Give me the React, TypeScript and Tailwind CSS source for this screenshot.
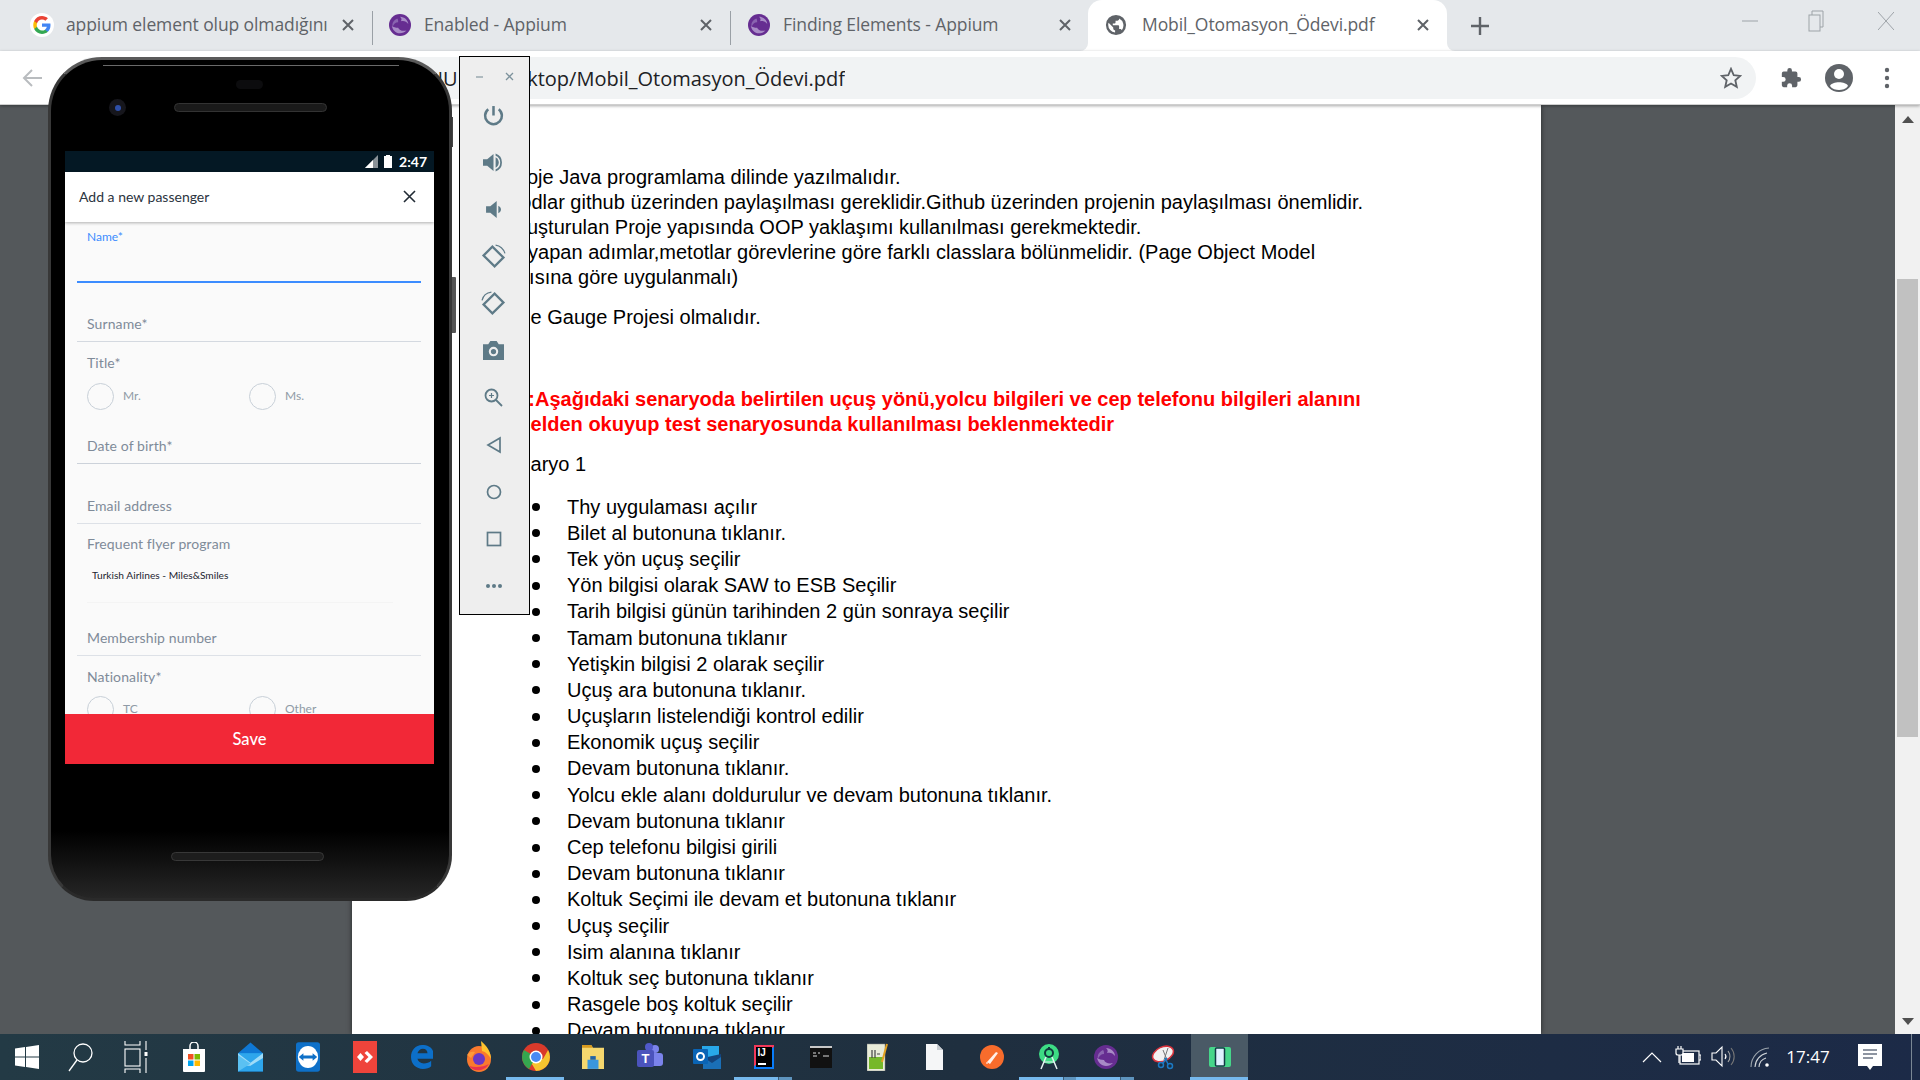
import React from "react";

const sans = "font-['Liberation_Sans',Arial,sans-serif]";

function Appium({ size = 22 }: { size?: number }) {
  return (
    <svg width={size} height={size} viewBox="0 0 24 24">
      <circle cx="12" cy="12" r="12" fill="#662d91" />
      <path d="M12 3c5 0 9 4 9 8-2-3-5-4-8-3 1-2 1-3-1-5z" fill="#a88bc6" />
      <path d="M3 13c1 4 4 8 9 8 3 0 5-1 7-3-4 1-8 0-9-3-3 0-5-1-7-2z" fill="#a88bc6" />
      <path d="M9 5C5 7 3 10 4 14c1-3 3-5 6-5 0-2 0-3-1-4z" fill="#8a64b0" />
    </svg>
  );
}

function GoogleG() {
  return (
    <svg width="24" height="24" viewBox="0 0 48 48">
      <circle cx="24" cy="24" r="24" fill="#fff" />
      <path fill="#4285f4" d="M41 24.5c0-1.2-.1-2.400-.3-3.500H24v6.700h9.600c-.4 2.200-1.700 4.100-3.500 5.300v4.400h5.700C39.100 34.300 41 29.800 41 24.500z" />
      <path fill="#34a853" d="M24 42c4.700 0 8.700-1.600 11.700-4.300L30 33.300c-1.600 1.100-3.600 1.700-6 1.700-4.600 0-8.500-3.100-9.900-7.300H8.300v4.500C11.200 38 17.100 42 24 42z" />
      <path fill="#fbbc05" d="M14.100 27.700c-.4-1.100-.6-2.300-.6-3.700s.2-2.500.6-3.700v-4.500H8.300C7.100 18.200 6.500 21 6.500 24s.7 5.800 1.800 8.200z" />
      <path fill="#ea4335" d="M24 13c2.600 0 4.900.9 6.800 2.700l5-5C32.700 7.800 28.700 6 24 6 17.100 6 11.200 10 8.300 15.800l5.800 4.500C15.500 16.100 19.400 13 24 13z" />
    </svg>
  );
}

function Globe() {
  return (
    <svg width="22" height="22" viewBox="0 0 24 24">
      <path fill="#5f6368" d="M12 1a11 11 0 1 0 0 22 11 11 0 0 0 0-22zM3.500 12c0-.9.100-1.700.4-2.500L9 14.600v1.100c0 1.100.9 2 2 2v2.600A8.500 8.500 0 0 1 3.500 12zm14.800 5.700c-.3-.8-1-1.400-1.900-1.400h-1v-3c0-.6-.4-1-1-1H8.500v-2h2c.6 0 1-.4 1-1v-2h2c1.100 0 2-.9 2-2v-.400a8.500 8.500 0 0 1 2.800 12.800z" />
    </svg>
  );
}

function TabX() {
  return (
    <svg width="14" height="14" viewBox="0 0 14 14" stroke="#5f6368" strokeWidth="2" className="shrink-0">
      <path d="M2 2l10 10M12 2L2 12" />
    </svg>
  );
}

function Tab({ icon, title, w, pl, textW, sep = true }: { icon: React.ReactNode; title: string; w: string; pl: string; textW: string; sep?: boolean }) {
  return (
    <div className={`${w} ${pl} h-full flex items-center relative pb-[2px]`}>
      <div className="w-[24px] flex justify-center shrink-0">{icon}</div>
      <div className={`${textW} ml-[12px] overflow-hidden whitespace-nowrap text-[17.500px] tracking-[-0.1px] text-[#5f6368] font-['Open_Sans',sans-serif]`}>{title}</div>
      <TabX />
      {sep && <div className="absolute right-0 top-[11px] w-px h-[34px] bg-[#9aa0a6]" />}
    </div>
  );
}

function TaskIcon({ children, bar }: { children?: React.ReactNode; bar?: "on" | "split" | "active" }) {
  return (
    <div className={`w-[57px] h-full relative flex items-center justify-center ${bar === "active" ? "bg-[#4a5a66]" : ""}`}>
      {children}
      {bar && <div className="absolute bottom-0 left-[-1px] right-0 h-[3px] bg-[#76b9ed]" />}
      {bar === "split" && <div className="absolute bottom-0 right-0 w-[14px] h-[3px] bg-[#5e94be] border-l border-[#3a5a75]" />}
    </div>
  );
}

const Ic = "#5e7a87";

function EmuBtn({ children }: { children: React.ReactNode }) {
  return <div className="h-[47px] flex items-center justify-center pr-[2px]">{children}</div>;
}

function Emu() {
  return (
    <div className="absolute left-[459px] top-[-49px] w-[71px] h-[559px] bg-[#eeeeee] border border-black z-20">
      <div className="h-[40px] flex items-center justify-between pl-[15px] pr-[14px]">
        <svg width="10" height="10" viewBox="0 0 10 10"><path d="M1 5h7" stroke="#9aa8af" strokeWidth="1.500" /></svg>
        <svg width="10" height="10" viewBox="0 0 10 10"><path d="M1 1l7 7M8 1L1 8" stroke="#7d929c" strokeWidth="1.300" /></svg>
      </div>
      <div className="mt-[-5px]">
        <EmuBtn>
          <svg width="21" height="21" viewBox="0 0 20 20" fill="none" stroke={Ic} strokeWidth="2.400">
            <path d="M10 1v9" /><path d="M5 4a8 8 0 1 0 10 0" />
          </svg>
        </EmuBtn>
        <EmuBtn>
          <svg width="21" height="21" viewBox="0 0 20 20" fill={Ic}>
            <path d="M0 7v6h4l6 5V2L4 7z" /><path d="M12 5c2 1 3 3 3 5s-1 4-3 5z" /><path d="M12 1.500a9 9 0 0 1 0 17v-2a7 7 0 0 0 0-13z" />
          </svg>
        </EmuBtn>
        <EmuBtn>
          <svg width="17" height="17" viewBox="0 0 16 16" fill={Ic}>
            <path d="M1 5v6h4l6 5V0L5 5z" /><path d="M12.500 4.500c1.500.8 2.500 2 2.500 3.500s-1 2.700-2.500 3.500z" />
          </svg>
        </EmuBtn>
        <EmuBtn>
          <svg width="25" height="25" viewBox="0 0 24 24" fill="none" stroke={Ic} strokeWidth="2.200">
            <rect x="4.500" y="6" width="15" height="12" transform="rotate(45 12 12)" />
            <path d="M14 1c4 .5 7.500 3.500 9 8" strokeWidth="1.200" />
          </svg>
        </EmuBtn>
        <EmuBtn>
          <svg width="25" height="25" viewBox="0 0 24 24" fill="none" stroke={Ic} strokeWidth="2.200">
            <rect x="4.500" y="6" width="15" height="12" transform="rotate(-45 12 12)" />
            <path d="M10 1C5.500 1.500 2 4.500 1 9" strokeWidth="1.200" />
          </svg>
        </EmuBtn>
        <EmuBtn>
          <svg width="21" height="21" viewBox="0 0 20 20">
            <path fill={Ic} d="M0 4h5l2-3h6l2 3h5v15H0z" />
            <circle cx="10" cy="11" r="3.500" fill="none" stroke="#eeeeee" strokeWidth="2" />
          </svg>
        </EmuBtn>
        <EmuBtn>
          <svg width="19" height="19" viewBox="0 0 19 19" fill="none" stroke={Ic} strokeWidth="1.800">
            <circle cx="7.500" cy="7.500" r="6" /><path d="M12 12l6 6" /><path d="M7.500 5v5M5 7.500h5" strokeWidth="1.200" />
          </svg>
        </EmuBtn>
        <EmuBtn>
          <svg width="16" height="18" viewBox="0 0 16 18" fill="none" stroke={Ic} strokeWidth="1.700"><path d="M14 2v14L2 9z" /></svg>
        </EmuBtn>
        <EmuBtn>
          <svg width="18" height="18" viewBox="0 0 18 18" fill="none" stroke={Ic} strokeWidth="1.700"><circle cx="9" cy="9" r="6.500" /></svg>
        </EmuBtn>
        <EmuBtn>
          <svg width="16" height="16" viewBox="0 0 16 16" fill="none" stroke={Ic} strokeWidth="1.700"><rect x="1.500" y="1.500" width="13" height="13" /></svg>
        </EmuBtn>
        <EmuBtn>
          <svg width="18" height="6" viewBox="0 0 18 6" fill={Ic}><circle cx="3" cy="3" r="2" /><circle cx="9" cy="3" r="2" /><circle cx="15" cy="3" r="2" /></svg>
        </EmuBtn>
      </div>
    </div>
  );
}

function Radio({ label, w }: { label: string; w: string }) {
  return (
    <div className={`${w} flex items-center`}>
      <div className="w-[27px] h-[27px] rounded-full border border-[#c8d0d8] shrink-0" />
      <div className="ml-[9px] text-[12px] text-[#8f9aa6]">{label}</div>
    </div>
  );
}

function Label({ children, className = "" }: { children: React.ReactNode; className?: string }) {
  return <div className={`px-[10px] h-[16px] leading-[16px] text-[14px] tracking-[0.1px] text-[#7f8b99] ${className}`}>{children}</div>;
}

function Phone() {
  return (
    <div className="absolute left-[48px] top-[-48px] w-[404px] h-[844px] z-10">
      <div className="absolute right-[-4px] top-[220px] w-[5px] h-[56px] bg-[#555] rounded-r-[1px]" />
      <div className="absolute right-[-1px] top-[60px] w-[1px] h-[30px] bg-[#444]" />
      <div className="w-full h-full rounded-t-[54px] rounded-b-[46px] border-[3px] border-t-[#5a5a5a] border-x-[#383838] border-b-[#2a2a2a] bg-[linear-gradient(to_bottom,#000_0%,#000_92%,#262626_100%)] pt-[91px] pl-[14px] relative overflow-hidden font-['Lato',sans-serif]">
        <div className="absolute top-[5px] left-[52px] w-[296px] h-px bg-[#6a6a6a]" />
        <div className="absolute top-[20px] left-[185px] w-[27px] h-[9px] rounded-full bg-[#0c0c0e]" />
        <div className="absolute top-[39px] left-[58px] w-[17px] h-[17px] rounded-full bg-[#16161c] flex items-center justify-center">
          <div className="w-[6px] h-[6px] rounded-full bg-[#2e4fa8]" />
        </div>
        <div className="absolute top-[43px] left-[123px] w-[153px] h-[9px] rounded-full bg-[#1a1a1a] border border-[#333]" />
        <div className="absolute top-[792px] left-[120px] w-[153px] h-[9px] rounded-full bg-[#1d1d1d] border border-[#383838]" />
        <div className="w-[369px]">
          <div className="h-[21px] bg-[#041824] flex items-center justify-end pr-[7px] gap-[6px] text-white">
            <svg width="13" height="13" viewBox="0 0 13 13"><path d="M13 0v13H0z" fill="#8a9298" /><path d="M8 5v8H0z" fill="#fff" /></svg>
            <svg width="8" height="13" viewBox="0 0 8 13"><path d="M0 1h2V0h4v1h2v12H0z" fill="#fff" /></svg>
            <span className="ml-[1px] text-[14px] font-bold leading-none">2:47</span>
          </div>
          <div className="h-[50px] bg-white shadow-[0_1px_3px_rgba(0,0,0,0.3)] flex items-center justify-between pl-[14px] pr-[18px] pb-[2px] relative z-10">
            <span className="text-[14px] text-[#2b3440]">Add a new passenger</span>
            <svg width="13" height="13" viewBox="0 0 13 13" stroke="#222b35" strokeWidth="1.600"><path d="M1 1l11 11M12 1L1 12" /></svg>
          </div>
          <div className="h-[492px] bg-[#fafafa] overflow-hidden pl-[12px] pr-[13px]">
            <div className="mt-[7px] px-[10px] h-[16px] leading-[16px] text-[12px] text-[#3c8cff]">Name*</div>
            <div className="h-[38px] border-b-2 border-[#3c8cff]" />
            <Label className="mt-[33px]">Surname*</Label>
            <div className="h-[10px] border-b border-[#d4d9e0]" />
            <Label className="mt-[13px]">Title*</Label>
            <div className="mt-[12px] h-[26px] pl-[10px] flex">
              <Radio label="Mr." w="w-[162px]" />
              <Radio label="Ms." w="w-[120px]" />
            </div>
            <Label className="mt-[29px]">Date of birth*</Label>
            <div className="h-[10px] border-b border-[#ccd2da]" />
            <Label className="mt-[34px]">Email address</Label>
            <div className="h-[10px] border-b border-[#dde1e7]" />
            <Label className="mt-[12px]">Frequent flyer program</Label>
            <div className="mt-[17px] pl-[15px] h-[12px] leading-[12px] text-[10.200px] text-[#1d2530]">Turkish Airlines - Miles&amp;Smiles</div>
            <div className="ml-[10px] w-[306px] h-[22px] border-b border-[#f4f4f4]" />
            <Label className="mt-[27px]">Membership number</Label>
            <div className="h-[10px] border-b border-[#dde1e7]" />
            <Label className="mt-[13px]">Nationality*</Label>
            <div className="mt-[11px] h-[26px] pl-[10px] flex">
              <Radio label="TC" w="w-[162px]" />
              <Radio label="Other" w="w-[120px]" />
            </div>
          </div>
          <div className="h-[50px] bg-[#f22837] flex items-center justify-center text-white text-[16.500px] font-medium">Save</div>
        </div>
      </div>
    </div>
  );
}

const lines = [
  "Thy uygulaması açılır",
  "Bilet al butonuna tıklanır.",
  "Tek yön uçuş seçilir",
  "Yön bilgisi olarak SAW to ESB Seçilir",
  "Tarih bilgisi günün tarihinden 2 gün sonraya seçilir",
  "Tamam butonuna tıklanır",
  "Yetişkin bilgisi 2 olarak seçilir",
  "Uçuş ara butonuna tıklanır.",
  "Uçuşların listelendiği kontrol edilir",
  "Ekonomik uçuş seçilir",
  "Devam butonuna tıklanır.",
  "Yolcu ekle alanı doldurulur ve devam butonuna tıklanır.",
  "Devam butonuna tıklanır",
  "Cep telefonu bilgisi girili",
  "Devam butonuna tıklanır",
  "Koltuk Seçimi ile devam et butonuna tıklanır",
  "Uçuş seçilir",
  "Isim alanına tıklanır",
  "Koltuk seç butonuna tıklanır",
  "Rasgele boş koltuk seçilir",
  "Devam butonuna tıklanır",
];

function Pdf() {
  return (
    <div className={`ml-[352px] w-[1189px] h-full bg-white overflow-hidden pt-[60px] text-[20px] leading-[25px] text-black whitespace-nowrap ${sans} shadow-[0_0_5px_rgba(0,0,0,0.55)]`}>
      <div className="pl-[155px]">Proje Java programlama dilinde yazılmalıdır.</div>
      <div className="pl-[155px]">Kodlar github üzerinden paylaşılması gereklidir.Github üzerinden projenin paylaşılması önemlidir.</div>
      <div className="pl-[155px]">Oluşturulan Proje yapısında OOP yaklaşımı kullanılması gerekmektedir.</div>
      <div className="pl-[155px]">İş yapan adımlar,metotlar görevlerine göre farklı classlara bölünmelidir. (Page Object Model</div>
      <div className="pl-[143px]">Yapısına göre uygulanmalı)</div>
      <div className="pl-[143px] mt-[15px]">Proje Gauge Projesi olmalıdır.</div>
      <div className="pl-[143px] mt-[57px] font-bold text-[#ff0000]">Not:Aşağıdaki senaryoda belirtilen uçuş yönü,yolcu bilgileri ve cep telefonu bilgileri alanını</div>
      <div className="pl-[143px] font-bold text-[#ff0000]">Excelden okuyup test senaryosunda kullanılması beklenmektedir</div>
      <div className="pl-[143px] mt-[15px]">Senaryo 1</div>
      <div className="mt-[17px] pl-[180px]">
        {lines.map((l, i) => (
          <div key={i} className="h-[26.200px] flex items-center">
            <div className="w-[8px] h-[8px] rounded-full bg-black mr-[27px] shrink-0" />
            <span>{l}</span>
          </div>
        ))}
      </div>
    </div>
  );
}

function Scrollbar() {
  return (
    <div className="w-[25px] h-full bg-[#f1f1f1] flex flex-col items-center">
      <svg width="12" height="7" viewBox="0 0 12 7" className="mt-[11px]"><path d="M6 0l6 7H0z" fill="#505050" /></svg>
      <div className="mt-[156px] w-[21px] h-[458px] bg-[#c1c1c1]" />
      <div className="flex-1" />
      <svg width="12" height="7" viewBox="0 0 12 7" className="mb-[9px]"><path d="M6 7L0 0h12z" fill="#505050" /></svg>
    </div>
  );
}

function Taskbar() {
  return (
    <div className="h-[46px] shrink-0 flex items-center bg-gradient-to-r from-[#233a45] via-[#1f2f3f] to-[#1c2a47] text-white relative z-30">
      <div className="w-[54px] h-full flex items-center justify-center">
        <svg width="24" height="24" viewBox="0 0 24 24" fill="#fff">
          <path d="M0 3.500l10-1.400v9.400H0zM11 2l13-2v11.500H11zM0 12.500h10v9.400L0 20.500zM11 12.500h13V24l-13-2z" />
        </svg>
      </div>
      <div className="w-[54px] h-full flex items-center justify-center">
        <svg width="26" height="30" viewBox="0 0 26 30" fill="none" stroke="#fff" strokeWidth="1.300">
          <circle cx="15" cy="11" r="9" /><path d="M9 18L1 29" />
        </svg>
      </div>
      <div className="w-[57px] h-full flex items-center justify-center">
        <svg width="26" height="32" viewBox="0 0 26 32" fill="none" stroke="#fff" strokeWidth="1.100">
          <path d="M1 0v4h15V0M1 32v-4h15v4" /><rect x="1" y="8" width="15" height="17" />
          <path d="M22 0v9M22 17v15" /><rect x="20.500" y="11" width="3" height="4" fill="#fff" stroke="none" />
        </svg>
      </div>
      <TaskIcon>
        <svg width="24" height="30" viewBox="0 0 24 30">
          <path d="M8 7V4a4 4 0 0 1 8 0v3" fill="none" stroke="#fff" strokeWidth="1.500" />
          <path d="M1 7h22v22a1 1 0 0 1-1 1H2a1 1 0 0 1-1-1z" fill="#fff" />
          <rect x="6" y="12" width="5.500" height="5.500" fill="#f25022" /><rect x="12.500" y="12" width="5.500" height="5.500" fill="#7fba00" />
          <rect x="6" y="18.500" width="5.500" height="5.500" fill="#00a4ef" /><rect x="12.500" y="18.500" width="5.500" height="5.500" fill="#ffb900" />
        </svg>
      </TaskIcon>
      <TaskIcon>
        <svg width="25" height="30" viewBox="0 0 26 30">
          <path d="M0 11L13 0l13 11v19H0z" fill="#0f78d4" /><path d="M0 11h26v19H0z" fill="#2ea6ec" />
          <path d="M0 11l13 10 13-10v5l-13 8H0z" fill="#9fdcf8" /><path d="M0 13l13 9L0 30z" fill="#5bc1f2" />
        </svg>
      </TaskIcon>
      <TaskIcon>
        <svg width="24" height="30" viewBox="0 0 26 32">
          <rect width="26" height="32" rx="3" fill="#0e70c8" /><ellipse cx="13" cy="16" rx="11" ry="12" fill="#fff" />
          <path d="M3 16l5-4v2.500h10V12l5 4-5 4v-2.500H8V20z" fill="#0e70c8" />
        </svg>
      </TaskIcon>
      <TaskIcon>
        <svg width="24" height="32" viewBox="0 0 24 32">
          <rect width="24" height="32" fill="#ef443b" /><path d="M10 16l-3.500-4L3 16l3.500 4zM13 10l6 6-6 6-2.500-2 4-4-4-4z" fill="#fff" transform="translate(1 0)" />
        </svg>
      </TaskIcon>
      <TaskIcon>
        <svg width="22" height="30" viewBox="0 0 24 28">
          <path d="M12 1C5 1 0 7 0 14c0 8 6 13 13 13 4 0 7-1 9-3v-6c-2 2-5 3-8 3-4 0-6-2-7-5h18v-3C25 5 20 1 12 1zM7 10c1-3 3-5 6-5s5 2 5 5z" fill="#0c6fc9" />
        </svg>
      </TaskIcon>
      <TaskIcon>
        <svg width="24" height="32" viewBox="0 0 24 32">
          <ellipse cx="12" cy="18" rx="12" ry="13" fill="#f9792e" /><path d="M14 0c6 5 10 11 10 18-2-4-5-7-9-8z" fill="#ffc32e" />
          <path d="M0 14c2-3 5-4 8-3l-4 6z" fill="#ff9a3a" /><circle cx="12" cy="18" r="6" fill="#6b37c5" /><path d="M2 25c3 5 14 7 20-2-5 3-14 4-20 2z" fill="#e8324f" />
        </svg>
      </TaskIcon>
      <TaskIcon bar="on">
        <svg width="28" height="30" viewBox="0 0 28 28">
          <circle cx="14" cy="14" r="14" fill="#d93a2b" />
          <path d="M26.100 7A14 14 0 0 1 14 28l-7-12h14z" fill="#f6c42f" />
          <path d="M14 14L7 26a14 14 0 0 1-5.100-19z" fill="#35a64f" />
          <circle cx="14" cy="14" r="6.500" fill="#fff" /><circle cx="14" cy="14" r="5" fill="#4a8af4" />
        </svg>
      </TaskIcon>
      <TaskIcon>
        <svg width="22" height="26" viewBox="0 0 24 26">
          <path d="M0 0h10l2 3h12v23H0z" fill="#f5d76e" /><path d="M0 0h10l2 3H0z" fill="#d79a1f" />
          <path d="M6 16h12v10H6z" fill="#3a96dd" /><path d="M9 12h6v4H9z" fill="#2364a6" />
        </svg>
      </TaskIcon>
      <TaskIcon>
        <svg width="26" height="28" viewBox="0 0 26 28">
          <circle cx="18" cy="6" r="4" fill="#7b83eb" /><rect x="13" y="10" width="13" height="13" rx="3" fill="#7b83eb" />
          <circle cx="12" cy="4" r="4" fill="#5059c9" /><rect x="0" y="7" width="17" height="17" rx="2" fill="#4b53bc" />
          <text x="4.500" y="20" fontSize="13" fontWeight="700" fill="#fff" fontFamily="Liberation Sans">T</text>
        </svg>
      </TaskIcon>
      <TaskIcon>
        <svg width="28" height="26" viewBox="0 0 28 26">
          <path d="M9 2h17v11H9z" fill="#28a8ea" /><path d="M10 14l18-4v15H10z" fill="#14447d" /><path d="M10 13l9 6 9-6v12H10z" fill="#1a6fb7" />
          <rect x="0" y="5" width="15" height="15" rx="1" fill="#0a64b5" /><circle cx="7.500" cy="12.500" r="3.500" fill="none" stroke="#fff" strokeWidth="2" />
        </svg>
      </TaskIcon>
      <TaskIcon bar="split">
        <div className="w-[20px] h-[24px] bg-[linear-gradient(135deg,#f3385a_0%,#f3385a_50%,#087cfa_50%,#087cfa_100%)] p-[2px]">
          <div className="w-full h-full bg-black flex flex-col justify-between pl-[2px] text-[10px] font-bold leading-[11px] text-white font-['Liberation_Sans',sans-serif]">
            <span>IJ</span><span className="block w-[8px] h-[2px] bg-white mb-[2px]" />
          </div>
        </div>
      </TaskIcon>
      <TaskIcon>
        <svg width="22" height="22" viewBox="0 0 22 22">
          <rect width="22" height="22" fill="#111" /><rect width="22" height="2" fill="#c8c8c8" />
          <path d="M3 7h3M8 7h2M3 10h4M13 10h6" stroke="#ddd" strokeWidth="1" />
        </svg>
      </TaskIcon>
      <TaskIcon>
        <svg width="22" height="28" viewBox="0 0 22 28">
          <rect y="1" width="18" height="27" fill="#e9ecd9" stroke="#888" strokeWidth=".5" />
          <rect x="2" y="14" width="14" height="12" fill="#76b82a" />
          <path d="M5 7v8M8 7v8M10 11h3" stroke="#444" strokeWidth="1.200" />
          <path d="M20 1l-5 18" stroke="#e2a11f" strokeWidth="2" />
        </svg>
      </TaskIcon>
      <TaskIcon>
        <svg width="17" height="26" viewBox="0 0 17 26">
          <path d="M0 0h11l6 6v20H0z" fill="#f5f6f7" /><path d="M11 0l6 6h-6z" fill="#c7ccd1" />
        </svg>
      </TaskIcon>
      <TaskIcon>
        <svg width="24" height="26" viewBox="0 0 24 24">
          <circle cx="12" cy="12" r="12" fill="#f86c2c" />
          <path d="M7 17L16 7l2 1-8 11z" fill="#fff" opacity=".9" /><path d="M6 18h2" stroke="#fff" strokeWidth="1" />
        </svg>
      </TaskIcon>
      <TaskIcon bar="split">
        <svg width="20" height="26" viewBox="0 0 20 26">
          <circle cx="10" cy="10" r="10" fill="#3ddc84" /><circle cx="10" cy="9" r="4" fill="none" stroke="#113a3e" strokeWidth="2" />
          <path d="M10 3v3" stroke="#113a3e" strokeWidth="2" /><path d="M7 13L2 25M13 13l5 12" stroke="#e5f0f0" strokeWidth="1.500" /><path d="M5 18h10" stroke="#e5f0f0" strokeWidth="1" />
        </svg>
      </TaskIcon>
      <TaskIcon bar="split">
        <Appium size={24} />
      </TaskIcon>
      <TaskIcon>
        <svg width="24" height="26" viewBox="0 0 24 26">
          <ellipse cx="12" cy="10" rx="11" ry="7" fill="#f1f1f1" stroke="#d8333d" strokeWidth="1.500" transform="rotate(-25 12 10)" />
          <path d="M12 6l4 10M17 4l-4 12" stroke="#777" strokeWidth="1" />
          <circle cx="10" cy="21" r="2.500" fill="none" stroke="#1b79c4" strokeWidth="1.500" /><circle cx="19" cy="22" r="2.500" fill="none" stroke="#1b79c4" strokeWidth="1.500" />
          <path d="M12 19l4-5M17 20l-3-6" stroke="#1b79c4" strokeWidth="1.500" />
        </svg>
      </TaskIcon>
      <TaskIcon bar="active">
        <svg width="22" height="20" viewBox="0 0 22 20">
          <rect width="22" height="20" rx="2" fill="#46d68a" /><rect x="6.500" y="1" width="9" height="18" rx="1" fill="#dff1ff" stroke="#123a44" strokeWidth="1.500" />
        </svg>
      </TaskIcon>
      <div className="flex-1" />
      <svg width="20" height="12" viewBox="0 0 20 12" fill="none" stroke="#fff" strokeWidth="1.200" className="mr-[13px]"><path d="M1 11l9-9 9 9" /></svg>
      <svg width="26" height="22" viewBox="0 0 26 22" fill="none" stroke="#fff" strokeWidth="1.200" className="mr-[10px]">
        <rect x="5" y="5" width="19" height="13" /><rect x="7" y="7" width="12" height="9" fill="#fff" stroke="none" />
        <path d="M24 9h2v5h-2" /><path d="M1 3v4a2 2 0 0 0 2 2h3a2 2 0 0 0 2-2V3zM3 0v3M6 0v3M4 9v8" fill="#1e2d44" />
      </svg>
      <svg width="24" height="24" viewBox="0 0 24 24" fill="none" stroke="#fff" strokeWidth="1.100" className="mr-[15px]">
        <path d="M1 8v7h4l6 6V2L5 8z" /><path d="M14 9a4 4 0 0 1 0 5" /><path d="M17 6a9 9 0 0 1 0 11" stroke="#aaa" /><path d="M20 3a13 13 0 0 1 0 17" stroke="#777" />
      </svg>
      <svg width="20" height="22" viewBox="0 0 20 22" fill="none" stroke="#cfd4d8" strokeWidth="1.100" className="mr-[13px]">
        <path d="M1 21A19 19 0 0 1 19 2" stroke="#9aa3ab" /><path d="M5 21A15 15 0 0 1 17 7" /><path d="M9 21a10 10 0 0 1 7-9" /><circle cx="17" cy="19" r="1.800" fill="#fff" stroke="none" />
      </svg>
      <div className="w-[50px] text-center text-[17px] font-['Open_Sans',sans-serif] text-white">17:47</div>
      <div className="w-[24px] h-[27px] ml-[25px] mr-[38px] relative">
        <svg width="24" height="27" viewBox="0 0 24 27">
          <path d="M0 0h24v22h-9l-3 4-3-4H0z" fill="#fff" /><path d="M5 6h14M5 10h14M5 14h10" stroke="#1e2d44" strokeWidth="1.200" />
        </svg>
      </div>
      <div className="absolute left-[1911px] top-0 w-px h-full bg-[#7a8794]" />
    </div>
  );
}

export default function App() {
  return (
    <div className="w-[1920px] h-[1080px] overflow-hidden flex flex-col bg-white relative">
      <div className="h-[51px] shrink-0 bg-[#e5e8eb] flex items-center">
        <div className="h-full flex">
          <Tab w="w-[373px]" pl="pl-[30px]" textW="w-[275px]" icon={<GoogleG />} title="appium element olup olmadığını" />
          <Tab w="w-[358px]" pl="pl-[15px]" textW="w-[275px]" icon={<Appium />} title="Enabled - Appium" />
          <Tab w="w-[357px]" pl="pl-[16px]" textW="w-[275px]" icon={<Appium />} title="Finding Elements - Appium" sep={false} />
          <div className="w-[359px] h-full bg-white rounded-t-[14px] flex items-center pl-[16px] pb-[2px] relative">
            <div className="absolute left-[-8px] bottom-0 w-[8px] h-[8px] bg-white">
              <div className="w-full h-full bg-[#e5e8eb] rounded-br-[8px]" />
            </div>
            <div className="absolute right-[-8px] bottom-0 w-[8px] h-[8px] bg-white">
              <div className="w-full h-full bg-[#e5e8eb] rounded-bl-[8px]" />
            </div>
            <div className="w-[24px] flex justify-center shrink-0"><Globe /></div>
            <div className="w-[274px] ml-[14px] overflow-hidden whitespace-nowrap text-[17.500px] tracking-[-0.1px] text-[#5f6368] font-['Open_Sans',sans-serif]">Mobil_Otomasyon_Ödevi.pdf</div>
            <TabX />
          </div>
        </div>
        <svg width="18" height="18" viewBox="0 0 18 18" stroke="#5f6368" strokeWidth="2.400" className="ml-[24px]"><path d="M9 0v18M0 9h18" /></svg>
        <div className="flex-1" />
        <div className="flex items-center pr-[26px] pb-[10px]">
          <svg width="16" height="2" viewBox="0 0 16 2"><path d="M0 1h16" stroke="#9da3a8" strokeWidth="1" /></svg>
          <svg width="16" height="22" viewBox="0 0 16 22" fill="none" stroke="#9da3a8" strokeWidth="1" className="ml-[50px] mr-[54px]"><rect x="1" y="5" width="11" height="16" /><path d="M4 5V1h11v16h-3" /></svg>
          <svg width="16" height="22" viewBox="0 0 16 22" stroke="#9da3a8" strokeWidth="1"><path d="M0 2l16 18M16 2L0 20" /></svg>
        </div>
      </div>
      <div className="h-[54px] shrink-0 bg-white flex items-center border-b border-[#cfcfcf] shadow-[0_1px_3px_rgba(0,0,0,0.35)] relative z-[1]">
        <div className="w-[42px] flex justify-end">
          <svg width="20" height="20" viewBox="0 0 20 20" fill="none" stroke="#b9bcbf" strokeWidth="2"><path d="M20 10H2M10 2l-8 8 8 8" /></svg>
        </div>
        <div className="ml-[30px] w-[1684px] h-[42px] rounded-full bg-[#f1f3f4] flex items-center">
          <div className="w-[773px] text-right overflow-hidden whitespace-nowrap text-[20px] text-[#202124] font-['Open_Sans',sans-serif] pt-[2px]">
            <span className="float-right">
              <span className="mr-[27px]">C:/Users/MENU</span>/Desktop/Mobil_Otomasyon_Ödevi.pdf
            </span>
          </div>
          <div className="flex-1" />
          <svg width="22" height="22" viewBox="0 0 24 24" fill="none" stroke="#5f6368" strokeWidth="2" className="mr-[14px]"><path d="M12 2l3 7 7 .7-5.300 4.800 1.600 7.100L12 18l-6.300 3.600 1.600-7.100L2 9.700 9 9z" /></svg>
        </div>
        <div className="ml-[24px] flex items-center">
          <svg width="22" height="22" viewBox="0 0 24 24" fill="#5f6368"><path d="M20.500 11H19V7a2 2 0 0 0-2-2h-4V3.500a2.500 2.500 0 0 0-5 0V5H4a2 2 0 0 0-2 2v3.800h1.500a2.700 2.700 0 0 1 0 5.400H2V20a2 2 0 0 0 2 2h3.800v-1.500a2.700 2.700 0 0 1 5.400 0V22H17a2 2 0 0 0 2-2v-4h1.500a2.500 2.500 0 0 0 0-5z" /></svg>
          <svg width="30" height="30" viewBox="0 0 30 30" className="ml-[22px]">
            <circle cx="15" cy="15" r="14" fill="#5f6368" /><circle cx="15" cy="11" r="5" fill="#fff" /><path d="M6 23c2-5 16-5 18 0-2 3-6 4-9 4s-7-1-9-4z" fill="#fff" />
          </svg>
          <svg width="6" height="22" viewBox="0 0 6 22" fill="#5f6368" className="ml-[30px]"><circle cx="3" cy="3" r="2.200" /><circle cx="3" cy="11" r="2.200" /><circle cx="3" cy="19" r="2.200" /></svg>
        </div>
      </div>
      <div className="flex-1 flex bg-[#54585b] relative min-h-0">
        <div className="flex-1 min-w-0 relative"><Pdf /></div>
        <Scrollbar />
        <Phone />
        <Emu />
      </div>
      <Taskbar />
    </div>
  );
}
